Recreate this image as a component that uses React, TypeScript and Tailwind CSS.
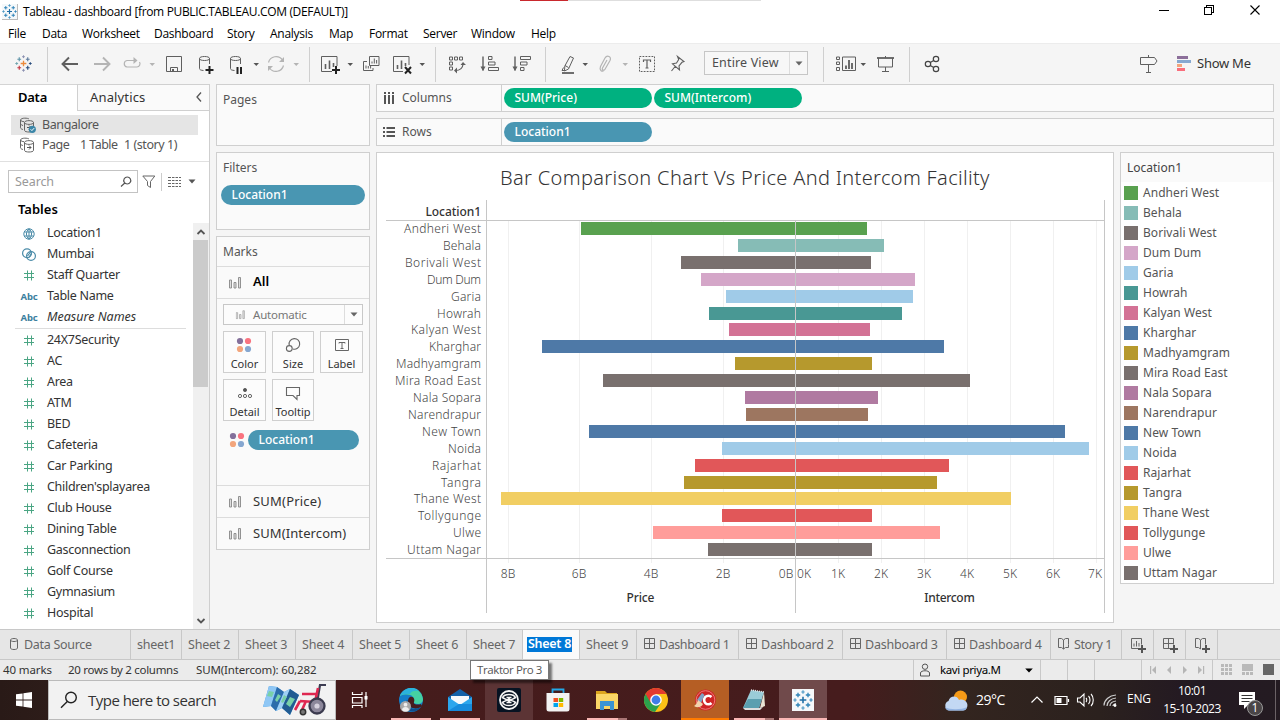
import React from 'react';

const ui = "font-['Noto_Sans','Liberation_Sans',sans-serif]";
const win = "font-['Open_Sans','Noto_Sans',sans-serif]";

/* ---------- shared icon helpers ---------- */

function Icon({ className = '', children }: { className?: string; children: React.ReactNode }) {
  return (
    <svg viewBox="0 0 24 24" fill="none" className={`h-6 w-6 shrink-0 ${className}`}>
      {children}
    </svg>
  );
}

function Caret({ className = '', light = false }: { className?: string; light?: boolean }) {
  return (
    <svg viewBox="0 0 8 24" className={`h-6 w-2 shrink-0 ${className}`}>
      <path d="M1.500 11h5.500L4.250 14z" fill={light ? '#b4b4b4' : '#555'} />
    </svg>
  );
}

function Sep({ className = '' }: { className?: string }) {
  return <div className={`-mt-[5px] h-[35px] w-px shrink-0 bg-[#cfcfcf] ${className}`} />;
}

function Plus({ x, y, s, c, w = 1 }: { x: number; y: number; s: number; c: string; w?: number }) {
  return <path d={`M${x - s} ${y}h${2 * s}M${x} ${y - s}v${2 * s}`} stroke={c} strokeWidth={w} />;
}

function TableauMark({ colors, className }: { colors: string[]; className: string }) {
  return (
    <svg viewBox="0 0 18 18" fill="none" className={`shrink-0 ${className}`}>
      <Plus x={9} y={9} s={3} c={colors[0]} w={1.4} />
      <Plus x={4.5} y={4.5} s={2} c={colors[1]} w={1.2} />
      <Plus x={13.5} y={4.5} s={2} c={colors[2]} w={1.2} />
      <Plus x={4.5} y={13.5} s={2} c={colors[3]} w={1.2} />
      <Plus x={13.5} y={13.5} s={2} c={colors[4]} w={1.2} />
      <Plus x={9} y={1.8} s={1.5} c={colors[5]} />
      <Plus x={9} y={16.2} s={1.5} c={colors[5]} />
      <Plus x={1.8} y={9} s={1.5} c={colors[6]} />
      <Plus x={16.2} y={9} s={1.5} c={colors[4]} />
    </svg>
  );
}

const BLUE_MARK = ['#1f6ea6', '#2f83b8', '#2f83b8', '#2f83b8', '#2f83b8', '#4a97c4', '#4a97c4'];
const COLOR_MARK = ['#eb8a3c', '#5d93a8', '#5c7a9c', '#c2343f', '#274b7c', '#8a8fb0', '#6fa5ae'];

/* ---------- title bar and menu ---------- */

function TitleBar() {
  return (
    <div className={`relative flex h-[22px] items-center bg-white ${win}`}>
      <div className="absolute left-[520px] top-0 h-px w-12 bg-[#c9282d]" />
      <div className="absolute left-[568px] top-0 h-px w-[193px] bg-[#dedede]" />
      <div className="ml-[2px] mt-[1px] flex h-[16px] w-[16px] items-center justify-center border-b border-r border-[#bbb] bg-[#f4f8fa]">
        <TableauMark colors={BLUE_MARK} className="h-[15px] w-[15px]" />
      </div>
      <span className="ml-[5px] mt-[2px] whitespace-nowrap text-[12px] tracking-[-0.34px] text-black">
        Tableau - dashboard [from PUBLIC.TABLEAU.COM (DEFAULT)]
      </span>
      <svg viewBox="0 0 120 22" fill="none" stroke="#000" className="ml-auto mr-[10px] h-[22px] w-[120px]" shapeRendering="crispEdges">
        <path d="M9 10.5h10" />
        <path d="M54.500 7.500h7v7h-7zM56.500 7.500v-2h7v7h-2" />
        <path d="M100.500 5.500l9 9M109.500 5.500l-9 9" shapeRendering="auto" strokeWidth="1.1" />
      </svg>
    </div>
  );
}

function MenuBar() {
  const item = 'shrink-0';
  return (
    <div className={`flex h-[21px] items-center whitespace-nowrap bg-white pb-px pl-2 pt-[3px] text-[12px] tracking-[-0.28px] text-black ${win}`}>
      <span className={`${item} w-[34px]`}>File</span>
      <span className={`${item} w-[40px]`}>Data</span>
      <span className={`${item} w-[72px]`}>Worksheet</span>
      <span className={`${item} w-[73px]`}>Dashboard</span>
      <span className={`${item} w-[43px]`}>Story</span>
      <span className={`${item} w-[59px]`}>Analysis</span>
      <span className={`${item} w-[40px]`}>Map</span>
      <span className={`${item} w-[54px]`}>Format</span>
      <span className={`${item} w-[48px]`}>Server</span>
      <span className={`${item} w-[60px]`}>Window</span>
      <span>Help</span>
    </div>
  );
}

/* ---------- toolbar ---------- */

const G = '#5f5f5f';
const L = '#b4b4b4';

function Cylinder() {
  return (
    <path
      d="M6.500 6.500c0-1.300 2.200-2 5-2s5 .7 5 2-2.200 2-5 2-5-.7-5-2zv10c0 1.300 1.500 1.800 4 2M16.500 6.500v5.500"
      stroke={G}
    />
  );
}

function Toolbar() {
  return (
    <div className="flex h-[41px] items-start border-t border-[#ececec] bg-[#f5f5f5] pt-[8px]">
      <TableauMark colors={COLOR_MARK} className="ml-[15px] mt-[3px] h-[17px] w-[17px]" />
      <Sep className="ml-[15px]" />
      <Icon className="ml-[10px]">
        <path d="M4.500 12H20M11 5.500L4.500 12l6.500 6.500" stroke={G} strokeWidth="1.900" />
      </Icon>
      <Icon className="ml-[8px]">
        <path d="M4 12h15.500M13 5.500l6.500 6.500-6.500 6.500" stroke={L} strokeWidth="1.900" />
      </Icon>
      <Icon className="ml-[6px]">
        <path d="M14 8.500H7A3.300 3.300 0 0 0 7 15h10a3.300 3.300 0 0 0 2.500-5" stroke={L} strokeWidth="1.200" />
        <path d="M13.500 5l4 3.500-4 3.500z" fill={L} />
      </Icon>
      <Caret light className="ml-[4px]" />
      <Icon className="ml-[6px]">
        <path d="M4.500 4.500h15v15h-15zM8.500 19.500v-4h7v4" stroke={G} />
        <path d="M10 17h2v2.500h-2z" fill={G} />
      </Icon>
      <Icon className="ml-[7px]">
        <Cylinder />
        <Plus x={16.5} y={18} s={4} c="#222" w={2} />
      </Icon>
      <Icon className="ml-[7px]">
        <Cylinder />
        <path d="M13.500 15v7M17 15v7" stroke="#222" strokeWidth="2" />
      </Icon>
      <Caret className="ml-[4px]" />
      <Icon className="ml-[4px]">
        <path d="M4.500 10.500A7.800 7.800 0 0 1 18.500 8M19.500 13.500A7.800 7.800 0 0 1 5.500 16" stroke={L} strokeWidth="1.200" />
        <path d="M20 5v5h-5zM4 19v-5h5z" fill={L} />
      </Icon>
      <Caret light className="ml-[4px]" />
      <Sep className="ml-[9px]" />
      <Icon className="ml-[8px]">
        <path d="M14 19.500H3.500v-15h15.500V14" stroke={G} />
        <path d="M7.500 17v-5M11.500 17V8.500M15.500 15v-4" stroke={G} strokeWidth="1.600" />
        <Plus x={18} y={18} s={4} c="#222" w={2} />
      </Icon>
      <Caret className="ml-[4px]" />
      <Icon className="ml-[5px]">
        <path d="M10.500 4.500h9.500v9h-9.500zM8 9.500H4.500v9H14V16" stroke={G} />
        <path d="M13 11.500V9.500M15.300 11.500V6.500M17.600 11.500V8M7 16.500v-3M9.300 16.500v-2.500M11.600 16.500v-2.500" stroke={G} />
      </Icon>
      <Icon className="ml-[7px]">
        <path d="M13 19.500H3.500v-15h15.500V13" stroke={G} />
        <path d="M7.500 17v-4M11.500 17V8.500M15.500 14v-3" stroke={G} strokeWidth="1.600" />
        <path d="M15 15l6 6.500M21 15l-6 6.500" stroke="#222" strokeWidth="2" />
      </Icon>
      <Caret className="ml-[4px]" />
      <Sep className="ml-[9px]" />
      <Icon className="ml-[9px]">
        <path d="M4.500 5h3v3h-3zM9.500 5h3v3h-3zM14.500 5h3v3h-3zM4.500 10h3v3h-3zM4.500 15h3v3h-3z" stroke={G} />
        <path d="M10.500 18.500c4 0 7-2 7.500-6" stroke={G} strokeWidth="1.200" />
        <path d="M12 15.500l-3 3 3 3zM15.500 13l2.500-3 3 3z" fill={G} />
      </Icon>
      <Icon className="ml-[9px]">
        <path d="M5 4.500v14" stroke={G} strokeWidth="1.400" />
        <path d="M2.500 14.500h5L5 19z" fill={G} />
        <path d="M10.500 4.500h3.500v3h-3.500zM10.500 10h6.500v3h-6.500zM10.500 15.500h10v3h-10z" stroke={G} />
      </Icon>
      <Icon className="ml-[8px]">
        <path d="M5 4.500v14" stroke={G} strokeWidth="1.400" />
        <path d="M2.500 14.500h5L5 19z" fill={G} />
        <path d="M10.500 4.500h10v3h-10zM10.500 10h6.500v3h-6.500zM10.500 15.500h3.500v3h-3.500z" stroke={G} />
      </Icon>
      <Sep className="ml-[11px]" />
      <Icon className="ml-[10px]">
        <path d="M14 4.500l3.500 1.500-5 11-4 2 .3-5zM9 13.500l3.500 2M7.500 15.500l-1.500 3h3" stroke={G} />
        <path d="M6 21h12" stroke={G} strokeWidth="1.800" />
      </Icon>
      <Caret className="ml-[1px]" />
      <Icon className="ml-[4px]">
        <path d="M14 8l-4.500 8c-1 2 1.500 3 2.500 1.300l5-8.800c2-4-3-6-5-2.500l-4.500 8.500c-1.500 4 1.500 5 3 4.500" stroke={L} strokeWidth="1.200" />
      </Icon>
      <Caret light className="ml-[4px]" />
      <Icon className="ml-[6px]">
        <path d="M4.500 4.500h15v15h-15z" stroke={G} strokeDasharray="1.800 1.200" />
        <path d="M8.500 10V8h7v2M12 8v8M10.500 16h3" stroke={G} strokeWidth="1.200" />
      </Icon>
      <Icon className="ml-[6px]">
        <path d="M12.500 4.500l6.500 5-2 .8-3 3.500 .5 4-7-6 4-.8 2.200-3.500zM10.500 14L6.500 19" stroke={G} strokeWidth="1.100" />
      </Icon>
      <div className={`-mt-px ml-[15px] flex h-[24px] w-[104px] shrink-0 items-center border border-[#c6c6c6] bg-[#f7f7f7] text-[12.500px] text-[#4d4d4d] ${ui}`}>
        <span className="w-[84px] whitespace-nowrap pl-[7px] pt-px tracking-[0.15px]">Entire View</span>
        <span className="flex h-full flex-1 items-center justify-center border-l border-[#ddd]">
          <svg viewBox="0 0 8 5" className="h-[5px] w-[8px]">
            <path d="M.5.500h7L4 4.500z" fill="#666" />
          </svg>
        </span>
      </div>
      <Sep className="ml-[15px]" />
      <Icon className="ml-[10px]">
        <path d="M2.500 5h3v2.500h-3zM2.500 10h3v2.500h-3zM2.500 15.500h3v3h-3zM8.500 5h13v13.500h-13z" stroke={G} />
        <path d="M12 17v-3.500M15 17V8M18 17v-6" stroke={G} strokeWidth="1.800" />
      </Icon>
      <Caret className="ml-[1px]" />
      <Icon className="ml-[6px]">
        <path d="M4 6h17" stroke={G} strokeWidth="1.800" />
        <path d="M5.500 6v9h14V6M12.500 4v2M12.500 15v4M9 19.500h7" stroke={G} />
      </Icon>
      <Sep className="ml-[12px]" />
      <Icon className="ml-[10px]">
        <circle cx="8" cy="12" r="2.700" stroke="#444" strokeWidth="1.200" />
        <circle cx="16" cy="7" r="2.700" stroke="#444" strokeWidth="1.200" />
        <circle cx="16" cy="17" r="2.700" stroke="#444" strokeWidth="1.200" />
        <path d="M10.300 10.500L13.700 8.400M10.300 13.500l3.400 2.100" stroke="#444" strokeWidth="1.200" />
      </Icon>
      <Icon className="ml-[192px]">
        <path d="M4.500 5.500h14l2.500 3.500-2.500 3.500h-14zM12.500 3v2.500M12.500 12.500v8M10 20.500h5" stroke={G} />
      </Icon>
      <svg viewBox="0 0 14 16" className="ml-[17px] mt-[4px] h-4 w-[14px] shrink-0">
        <path d="M0 0h11v3H0z" fill="#8c6f9a" />
        <path d="M0 4h14v3H0z" fill="#86a8d0" />
        <path d="M0 8h5v3H0z" fill="#f3a57c" />
        <path d="M0 12h8v3H0z" fill="#f96e7c" />
      </svg>
      <span className={`ml-[6px] mt-[2px] whitespace-nowrap text-[13px] tracking-[-0.25px] text-[#333] ${ui}`}>Show Me</span>
    </div>
  );
}

/* ---------- data pane ---------- */

function FieldIcon({ kind }: { kind: string }) {
  if (kind === 'abc')
    return <span className="block text-center text-[9.500px] font-bold leading-[21px] tracking-[-0.1px] text-[#3d7f9e]">Abc</span>;
  return (
    <svg viewBox="0 0 16 21" fill="none" className="mx-auto h-[21px] w-4">
      {kind === 'num' && <path d="M6.500 5.500v10M10.500 5.500v10M3 8.500h10M3 12.500h10" stroke="#4aa583" strokeWidth="1" />}
      {kind === 'globe' && (
        <path
          d="M2.800 11a5.200 5.200 0 1 0 10.400 0 5.200 5.200 0 1 0-10.400 0M8 5.800v10.400M3.300 9h9.400M3.300 13h9.400M8 5.800c-3.400 3-3.400 7.400 0 10.400M8 5.800c3.400 3 3.400 7.400 0 10.400"
          stroke="#4a8ba8"
        />
      )}
      {kind === 'group' && (
        <g stroke="#4a8ba8" strokeWidth="1.200">
          <circle cx="6" cy="9.300" r="4.400" />
          <circle cx="10" cy="12" r="4.400" />
          <path d="M6.500 12l3-4M7.500 14l3-4.500" />
        </g>
      )}
    </svg>
  );
}

function Field({ kind, label, italic = false }: { kind: string; label: string; italic?: boolean }) {
  return (
    <div className="flex h-[21px] items-center">
      <span className="ml-[17px] w-[24px] shrink-0">{<FieldIcon kind={kind} />}</span>
      <span className={`ml-[6px] whitespace-nowrap ${italic ? 'italic tracking-[0px]' : ''}`}>{label}</span>
    </div>
  );
}

function SourceIcon({ checked }: { checked?: boolean }) {
  return (
    <svg viewBox="0 0 18 18" fill="none" className="h-[18px] w-[18px] shrink-0">
      <path d="M10 3c-1-1-7.500-1.500-8.500.8v8c.3 1 1.200 1.400 2.500 1.700M1.500 4c.5 1.200 2 1.600 3.500 1.700M1.500 8c.5 1 1.300 1.300 2.500 1.500" stroke="#666" />
      <path d="M5.500 6.500c0-2.500 9-2.500 9 0s-9 2.500-9 0zv8c.5 2 8.500 2 9 0v-8" stroke="#666" />
      <path d="M8 11.500h4M10 9.500l2 2-2 2" stroke="#555" />
      {checked && (
        <g>
          <circle cx="13.300" cy="13.300" r="3.600" fill="#3b86a8" />
          <path d="M11.600 13.300l1.300 1.300 2.300-2.500" stroke="#fff" />
        </g>
      )}
    </svg>
  );
}

const DIMENSIONS = [
  { kind: 'globe', label: 'Location1' },
  { kind: 'group', label: 'Mumbai' },
  { kind: 'num', label: 'Staff Quarter' },
  { kind: 'abc', label: 'Table Name' },
  { kind: 'abc', label: 'Measure Names', italic: true },
];

const MEASURES = [
  '24X7Security', 'AC', 'Area', 'ATM', 'BED', 'Cafeteria', 'Car Parking', "Children'splayarea",
  'Club House', 'Dining Table', 'Gasconnection', 'Golf Course', 'Gymnasium', 'Hospital',
];

function DataPane() {
  return (
    <div className="flex w-[210px] shrink-0 flex-col border-r border-[#cfcfcf] bg-white">
      <div className="flex h-[27px] shrink-0 text-[13px]">
        <div className="w-[77px] border-t border-[#d4d4d4] pl-[18px] pt-[3px] text-[13px] font-semibold tracking-[-0.25px] text-black">Data</div>
        <div className="flex flex-1 border border-r-0 border-[#d0d0d0] bg-[#fafafa] pl-[12px] pt-[3px] text-[#333]">
          <span className="tracking-[0.15px]">Analytics</span>
          <svg viewBox="0 0 8 12" fill="none" className="ml-auto mr-[6px] mt-[3px] h-3 w-2">
            <path d="M6 1.500L2 6l4 4.500" stroke="#555" strokeWidth="1.300" />
          </svg>
        </div>
      </div>
      <div className="ml-[11px] mt-[4px] flex h-[20px] w-[187px] shrink-0 items-center bg-[#e5e5e5] pl-[8px] text-[12.500px] text-[#555]">
        <SourceIcon checked />
        <span className="ml-[5px] tracking-[-0.4px]">Bangalore</span>
      </div>
      <div className="ml-[11px] flex h-[20px] shrink-0 items-center pl-[8px] text-[12.500px] text-[#555]">
        <SourceIcon />
        <span className="ml-[5px] w-[38px] tracking-[-0.5px]">Page</span>
        <span className="w-[44px] whitespace-nowrap tracking-[-0.55px]">1 Table</span>
        <span className="whitespace-nowrap tracking-[-0.45px]">1 (story 1)</span>
      </div>
      <div className="mt-[6px] h-px shrink-0 bg-[#e0e0e0]" />
      <div className="ml-[8px] mt-[8px] flex h-[23px] shrink-0 items-center">
        <div className="flex h-[23px] w-[130px] items-center border border-[#c3c3c3] pl-[6px] pt-px text-[12.500px] tracking-[-0.1px] text-[#999]">
          Search
          <svg viewBox="0 0 12 12" fill="none" className="ml-auto mr-[5px] h-3 w-3">
            <path d="M7.300 1a3.500 3.500 0 1 1-.1 0zM4.800 7L1 10.500" stroke="#555" strokeWidth="1.200" />
          </svg>
        </div>
        <svg viewBox="0 0 14 14" fill="none" className="ml-[4px] h-[14px] w-[14px]">
          <path d="M.8 1h12L8.500 6.500v6l-3-2v-4z" stroke="#666" />
        </svg>
        <div className="ml-[5px] h-[18px] w-px bg-[#ccc]" />
        <svg viewBox="0 0 13 10" className="ml-[6px] h-[10px] w-[13px]" stroke="#666" strokeWidth="1.100">
          <path d="M0 .5h3M4 .5h2.500M7.500.5H10M11 .5h2M0 3.500h3M4 3.500h2.500M7.500 3.500H10M11 3.500h2M0 6.500h3M4 6.500h2.500M7.500 6.500H10M11 6.500h2M0 9.500h3M4 9.500h2.500M7.500 9.500H10M11 9.500h2" />
        </svg>
        <svg viewBox="0 0 8 5" className="ml-[7px] h-[5px] w-[8px]">
          <path d="M.5.500h7L4 4.500z" fill="#555" />
        </svg>
      </div>
      <div className="ml-[18px] mt-[5px] h-[25px] shrink-0 text-[13px] font-semibold leading-[22px] tracking-[0px] text-black">Tables</div>
      <div className="flex min-h-0 flex-1">
        <div className="w-[193px] overflow-hidden text-[12.500px] tracking-[-0.28px] text-[#333]">
          {DIMENSIONS.map((f) => (
            <Field key={f.label} {...f} />
          ))}
          <div className="mb-px ml-[15px] mr-[7px] h-px bg-[#ddd]" />
          {MEASURES.map((m) => (
            <Field key={m} kind="num" label={m} />
          ))}
        </div>
        <div className="flex w-[16px] flex-col bg-[#f0f0f0]">
          <div className="flex h-[17px] items-center justify-center">
            <svg viewBox="0 0 10 8" fill="none" className="h-2 w-[10px]">
              <path d="M1.500 6L5 2.500 8.500 6" stroke="#555" strokeWidth="1.800" />
            </svg>
          </div>
          <div className="mr-px h-[147px] bg-[#cbcbcb]" />
          <div className="mb-[4px] mt-auto flex justify-center">
            <svg viewBox="0 0 10 8" fill="none" className="h-2 w-[10px]">
              <path d="M1.500 2L5 5.500 8.500 2" stroke="#555" strokeWidth="1.800" />
            </svg>
          </div>
        </div>
      </div>
    </div>
  );
}

/* ---------- cards ---------- */

const card = 'border border-[#cfcfcf] bg-[#fafafa]';

function Pill({ className, children }: { className: string; children: React.ReactNode }) {
  return (
    <div className={`flex h-[20px] shrink-0 items-center whitespace-nowrap rounded-full pl-[10.500px] text-[12px] font-medium text-white ${className}`}>
      {children}
    </div>
  );
}

function BarsIcon({ className = '' }: { className?: string }) {
  return (
    <svg viewBox="0 0 14 13" fill="#dedede" stroke="#888" strokeWidth="0.900" className={`h-[13px] w-[14px] shrink-0 ${className}`}>
      <path d="M.5 4h2v8h-2zM5 6.500h2v5.500h-2zM9.500 1.500h2v10.500h-2z" />
    </svg>
  );
}

function ColorDots({ className = '' }: { className?: string }) {
  return (
    <svg viewBox="0 0 16 16" className={`h-4 w-4 shrink-0 ${className}`}>
      <circle cx="4" cy="4" r="3.100" fill="#84709b" />
      <circle cx="12" cy="4" r="3.100" fill="#f9737f" />
      <circle cx="4" cy="12" r="3.100" fill="#f2a57c" />
      <circle cx="12" cy="12" r="3.100" fill="#86a7d0" />
    </svg>
  );
}

function MarkButton({ label, children }: { label: string; children: React.ReactNode }) {
  return (
    <div className="flex h-[42px] flex-col items-center border border-[#cfcfcf] bg-[#fcfcfc] pt-[5px]">
      {children}
      <span className="mt-[1px] whitespace-nowrap text-[11px] leading-[20px] text-[#333]">{label}</span>
    </div>
  );
}

function Cards() {
  return (
    <div className="ml-[6px] flex w-[154px] shrink-0 flex-col text-[12px] text-[#555]">
      <div className={`${card} h-[62px] pl-[6px] pt-[6px]`}>Pages</div>
      <div className={`${card} mt-[6px] h-[78px] pt-[6px]`}>
        <div className="h-[26px] pl-[6px]">Filters</div>
        <Pill className="ml-[4px] w-[144px] bg-[#4996b2]">Location1</Pill>
      </div>
      <div className={`${card} mt-[6px] flex h-[314px] flex-col`}>
        <div className="flex h-[29px] items-center pl-[6px] pt-px">Marks</div>
        <div className="flex h-[33px] items-center border-y border-[#dcdcdc] text-[13px] font-semibold text-black">
          <BarsIcon className="ml-[12px] mr-[10px]" />
          <span className="-mt-px">All</span>
        </div>
        <div className="ml-[6px] mt-[5px] flex h-[21px] w-[140px] items-center border border-[#c8c8c8] bg-[#fcfcfc] text-[11.500px] tracking-[-0.2px] text-[#777]">
          <BarsIcon className="ml-[10px] mr-[5px] origin-center scale-75 opacity-80" />
          Automatic
          <span className="ml-auto flex h-full w-[18px] items-center justify-center border-l border-[#ddd]">
            <svg viewBox="0 0 8 5" className="h-[5px] w-[8px]">
              <path d="M.5.500h7L4 4.500z" fill="#666" />
            </svg>
          </span>
        </div>
        <div className="ml-[6px] mt-[6px] grid w-[140px] grid-cols-[43px_42px_43px] gap-x-[6px] gap-y-[6px]">
          <MarkButton label="Color">
            <ColorDots className="-ml-[2px]" />
          </MarkButton>
          <MarkButton label="Size">
            <svg viewBox="0 0 16 16" fill="none" stroke="#666" strokeWidth="1.100" className="h-4 w-4 shrink-0">
              <path d="M4.200 8A5.300 5.300 0 1 1 8 12" />
              <circle cx="4.300" cy="11.500" r="2.900" />
            </svg>
          </MarkButton>
          <MarkButton label="Label">
            <svg viewBox="0 0 16 16" fill="none" stroke="#666" className="h-4 w-4 shrink-0">
              <path d="M1.500 2.500h13v11h-13zM5 6.500v-1h6v1M8 5.500v5.500M6.500 11.500h3" />
            </svg>
          </MarkButton>
          <MarkButton label="Detail">
            <svg viewBox="0 0 16 16" fill="none" stroke="#666" className="h-4 w-4 shrink-0">
              <circle cx="8" cy="5" r="1.600" fill="#555" />
              <circle cx="3" cy="11" r="1.600" />
              <circle cx="8" cy="11" r="1.600" />
              <circle cx="13" cy="11" r="1.600" />
            </svg>
          </MarkButton>
          <MarkButton label="Tooltip">
            <svg viewBox="0 0 16 16" fill="none" stroke="#666" strokeWidth="1.100" className="h-4 w-4 shrink-0">
              <path d="M1.500 2.500h13v8h-2.500v4l-4-4H1.500z" />
            </svg>
          </MarkButton>
        </div>
        <div className="mt-[9px] flex items-center">
          <ColorDots className="ml-[12px]" />
          <Pill className="ml-[3px] w-[111px] bg-[#4996b2]">Location1</Pill>
        </div>
        <div className="mt-auto flex h-[32px] items-center border-t border-[#dcdcdc] text-[13px] tracking-[0.2px] text-[#333]">
          <BarsIcon className="ml-[12px] mr-[10px]" />
          SUM(Price)
        </div>
        <div className="flex h-[32px] items-center border-t border-[#dcdcdc] text-[13px] tracking-[0.1px] text-[#333]">
          <BarsIcon className="ml-[12px] mr-[10px]" />
          SUM(Intercom)
        </div>
      </div>
    </div>
  );
}

/* ---------- chart ---------- */

type Row = { name: string; color: string; from: number; to: number; width: number };

const ROWS: Row[] = [
  { name: 'Andheri West', color: '#59a14f', from: 581, to: 867, width: 77 },
  { name: 'Behala', color: '#86bcb6', from: 738, to: 884, width: 38 },
  { name: 'Borivali West', color: '#79706e', from: 681, to: 871, width: 76 },
  { name: 'Dum Dum', color: '#d4a6c8', from: 701, to: 915, width: 54 },
  { name: 'Garia', color: '#a0cbe8', from: 726, to: 913, width: 30 },
  { name: 'Howrah', color: '#499894', from: 709, to: 902, width: 44 },
  { name: 'Kalyan West', color: '#d37295', from: 729, to: 870, width: 70 },
  { name: 'Kharghar', color: '#4e79a7', from: 542, to: 944, width: 52 },
  { name: 'Madhyamgram', color: '#b6992d', from: 735, to: 872, width: 85 },
  { name: 'Mira Road East', color: '#79706e', from: 603, to: 970, width: 86 },
  { name: 'Nala Sopara', color: '#b07aa1', from: 745, to: 878, width: 68 },
  { name: 'Narendrapur', color: '#9d7660', from: 746, to: 868, width: 73 },
  { name: 'New Town', color: '#4e79a7', from: 589, to: 1065, width: 59 },
  { name: 'Noida', color: '#a0cbe8', from: 722, to: 1089, width: 33 },
  { name: 'Rajarhat', color: '#e15759', from: 695, to: 949, width: 49 },
  { name: 'Tangra', color: '#b6992d', from: 684, to: 937, width: 40 },
  { name: 'Thane West', color: '#f1ce63', from: 501, to: 1011, width: 67 },
  { name: 'Tollygunge', color: '#e15759', from: 722, to: 872, width: 63 },
  { name: 'Ulwe', color: '#ff9d9a', from: 653, to: 940, width: 28 },
  { name: 'Uttam Nagar', color: '#79706e', from: 708, to: 872, width: 74 },
];

const GRID = [508, 579, 651, 723, 838, 881, 924, 967, 1010, 1053, 1096];
const TICKS: [string, number][] = [
  ['8B', 508], ['6B', 579], ['4B', 651], ['2B', 723], ['0B', 786], ['0K', 804], ['1K', 838],
  ['2K', 881], ['3K', 924], ['4K', 967], ['5K', 1010], ['6K', 1053], ['7K', 1095],
];

function Chart() {
  return (
    <div className="h-[471px] w-[738px] shrink-0 border border-[#cfcfcf] bg-white">
      <svg viewBox="377 153 736 469" className={`block h-[469px] w-[736px] ${ui}`}>
        <text x="500" y="185" fontSize="20" fontWeight="300" fill="#333" textLength="489.500">
          Bar Comparison Chart Vs Price And Intercom Facility
        </text>
        <g shapeRendering="crispEdges">
          {GRID.map((x) => (
            <rect key={x} x={x} y={221} width={1} height={342} fill="#f0f0f0" />
          ))}
          {ROWS.map((r, i) => (
            <rect key={r.name} x={r.from} y={Math.round(222 + i * 16.9)} width={r.to - r.from} height={13} fill={r.color} />
          ))}
          <rect x={386} y={220} width={719} height={1} fill="#c6c6c6" />
          <rect x={386} y={558} width={719} height={1} fill="#c6c6c6" />
          <rect x={486} y={200} width={1} height={413} fill="#c6c6c6" />
          <rect x={795} y={221} width={1} height={392} fill="#c6c6c6" />
          <rect x={1104} y={200} width={1} height={413} fill="#c6c6c6" />
        </g>
        <text x="481" y="216" textAnchor="end" fontSize="12" fontWeight="500" fill="#333" textLength="55.500">
          Location1
        </text>
        {ROWS.map((r, i) => (
          <text key={r.name} x={481} y={Math.round(233 + i * 16.9)} textAnchor="end" fontSize="12" fontWeight="300" fill="#444" textLength={r.width}>
            {r.name}
          </text>
        ))}
        {TICKS.map(([t, x]) => (
          <text key={t} x={x} y={578} textAnchor="middle" fontSize="12" fontWeight="300" fill="#444">
            {t}
          </text>
        ))}
        <text x="640.500" y="602" textAnchor="middle" fontSize="12" fontWeight="500" fill="#333" textLength="28">
          Price
        </text>
        <text x="949.500" y="602" textAnchor="middle" fontSize="12" fontWeight="500" fill="#333" textLength="50.500">
          Intercom
        </text>
      </svg>
    </div>
  );
}

function Legend() {
  return (
    <div className="ml-[6px] h-[432px] w-[154px] shrink-0 border border-[#cfcfcf] bg-white">
      <div className="flex h-[29px] items-center bg-[#fafafa] pl-[6px] pt-px text-[12px] text-[#444]">Location1</div>
      {ROWS.map((r) => (
        <div key={r.name} className="flex h-[20px] items-center pl-[3px] pt-px text-[12px] text-[#555]">
          <svg className="h-[14px] w-[14px]" viewBox="0 0 14 14">
            <rect width="14" height="14" fill={r.color} />
          </svg>
          <span className="ml-[5px] mt-px whitespace-nowrap tracking-[0.05px]">{r.name}</span>
        </div>
      ))}
    </div>
  );
}

function Workspace() {
  return (
    <div className="ml-[6px] flex w-[898px] shrink-0 flex-col">
      <div className={`${card} flex h-[28px] items-center text-[12px] text-[#555]`}>
        <svg viewBox="0 0 12 12" className="ml-[6px] h-3 w-3" fill="#555">
          <path d="M1 0h2v2H1zM5 0h2v2H5zM9 0h2v2H9zM1 3h2v9H1zM5 3h2v9H5zM9 3h2v9H9z" />
        </svg>
        <span className="ml-[7px] w-[99px]">Columns</span>
        <div className="flex h-full items-center border-l border-[#cfcfcf] pl-[2px]">
          <Pill className="w-[148px] bg-[#00b180]">SUM(Price)</Pill>
          <Pill className="ml-[2px] w-[148px] bg-[#00b180]">SUM(Intercom)</Pill>
        </div>
      </div>
      <div className={`${card} mt-[6px] flex h-[28px] items-center text-[12px] text-[#555]`}>
        <svg viewBox="0 0 12 12" className="ml-[6px] h-3 w-3" fill="#555">
          <path d="M0 1h2v2H0zM0 5h2v2H0zM0 9h2v2H0zM3.500 1H12v2H3.500zM3.500 5H12v2H3.500zM3.500 9H12v2H3.500z" />
        </svg>
        <span className="ml-[7px] w-[99px]">Rows</span>
        <div className="flex h-full items-center border-l border-[#cfcfcf] pl-[2px]">
          <Pill className="w-[148px] bg-[#4996b2]">Location1</Pill>
        </div>
      </div>
      <div className="mt-[6px] flex items-start">
        <Chart />
        <Legend />
      </div>
    </div>
  );
}

/* ---------- sheet tabs ---------- */

const tab = 'flex shrink-0 items-center border-r border-[#c8c8c8] pl-[6px] pt-px';

function GridGlyph({ plus = false }: { plus?: boolean }) {
  return (
    <svg viewBox="0 0 16 16" fill="none" stroke="#666" className="h-4 w-4 shrink-0">
      <path d={plus ? 'M8 11.500H1.500v-10h10v6M6.500 1.500v10M1.500 6.500h10' : 'M1.500 1.500h10v10h-10zM6.500 1.500v10M1.500 6.500h10'} />
      {plus && <Plus x={12} y={12} s={4} c="#555" w={2} />}
    </svg>
  );
}

function BookGlyph({ plus = false }: { plus?: boolean }) {
  return (
    <svg viewBox="0 0 16 16" fill="none" stroke="#666" className="h-4 w-4 shrink-0">
      <path d="M6.500 3L4.500 1.500h-3v9h3l2 1.500zM6.500 3L8.500 1.500h3v6" />
      {!plus && <path d="M11.500 7.500v3h-3l-2 1.500" />}
      {plus && <Plus x={12} y={12} s={4} c="#555" w={2} />}
    </svg>
  );
}

function SheetTabs() {
  return (
    <div className="flex h-[31px] shrink-0 whitespace-nowrap border-y border-[#c8c8c8] bg-[#e6e6e6] text-[12.500px] tracking-[-0.22px] text-[#666]">
      <div className={`${tab} w-[131px] tracking-[-0.3px]`}>
        <svg viewBox="0 0 12 14" fill="none" stroke="#666" className="-mt-[3px] ml-[2px] mr-[4px] h-[14px] w-3">
          <path d="M2.500 3c0-2 7-2 7 0s-7 2-7 0v8c0 2 7 2 7 0V3" />
        </svg>
        Data Source
      </div>
      <div className={`${tab} w-[51px]`}>sheet1</div>
      <div className={`${tab} w-[57px]`}>Sheet 2</div>
      <div className={`${tab} w-[57px]`}>Sheet 3</div>
      <div className={`${tab} w-[57px]`}>Sheet 4</div>
      <div className={`${tab} w-[57px]`}>Sheet 5</div>
      <div className={`${tab} w-[57px]`}>Sheet 6</div>
      <div className={`${tab} w-[56px]`}>Sheet 7</div>
      <div className="flex w-[57px] shrink-0 items-center border-r border-[#c8c8c8] bg-[#fafafa] pl-[4px]">
        <span className="h-[15px] w-[45px] bg-[#0078d7] text-center font-semibold leading-[13px] tracking-[-0.25px] text-white">Sheet 8</span>
      </div>
      <div className={`${tab} w-[57px]`}>Sheet 9</div>
      <div className={`${tab} w-[102px] tracking-[-0.42px]`}><GridGlyph />Dashboard 1</div>
      <div className={`${tab} w-[104px]`}><GridGlyph />Dashboard 2</div>
      <div className={`${tab} w-[104px]`}><GridGlyph />Dashboard 3</div>
      <div className={`${tab} w-[104px]`}><GridGlyph />Dashboard 4</div>
      <div className={`${tab} w-[71px] tracking-[-0.4px]`}><BookGlyph /><span className="ml-px">Story 1</span></div>
      <div className={`${tab} w-[32px] pl-[8px]`}>
        <svg viewBox="0 0 16 16" fill="none" stroke="#666" className="h-4 w-4">
          <path d="M8 11.500H1.500v-10h10v6M4 9.500v-3M6.500 9.500V4M9 9.500V6" />
          <Plus x={12} y={12} s={4} c="#555" w={2} />
        </svg>
      </div>
      <div className={`${tab} w-[32px] pl-[8px]`}><GridGlyph plus /></div>
      <div className={`${tab} w-[32px] pl-[8px]`}><BookGlyph plus /></div>
    </div>
  );
}

function StatusBar() {
  return (
    <div className="relative flex h-[20px] shrink-0 items-center whitespace-nowrap bg-[#ebebeb] pl-[3px] text-[11.500px] tracking-[-0.1px] text-[#333]">
      <span className="w-[65px]">40 marks</span>
      <span className="w-[128px] tracking-[-0.3px]">20 rows by 2 columns</span>
      <span className="w-[717px] tracking-[-0.15px]">SUM(Intercom): 60,282</span>
      <div className="flex h-full w-[127px] items-center border-l border-[#c8c8c8] text-[11.500px] tracking-[-0.38px] text-black">
        <svg viewBox="0 0 12 14" fill="none" stroke="#555" className="-mt-px ml-[5px] h-[14px] w-3">
          <circle cx="6" cy="3.700" r="2.700" />
          <path d="M1.500 13v-3c0-3 9-3 9 0v3z" />
        </svg>
        <span className="ml-[9px]">kavi priya.M</span>
        <svg viewBox="0 0 8 5" className="ml-auto mr-[7px] h-[5px] w-[8px]">
          <path d="M.2.500h7.600L4 4.500z" fill="#000" />
        </svg>
      </div>
      <div className="h-full w-[27px] border-l border-[#c8c8c8]" />
      <div className="h-full w-[27px] border-l border-[#c8c8c8]" />
      <div className="h-full w-[47px] border-l border-[#c8c8c8]" />
      <div className="flex h-full w-[71px] items-center border-l border-[#c8c8c8]">
        <svg viewBox="0 0 60 8" fill="#b5b5b5" className="ml-[7px] h-2 w-[60px]">
          <path d="M1 0h1.200v8H1zM7 0v8L3 4zM22 0v8l-4-4zM34 0v8l4-4zM49 0v8l4-4zM54 0h1.200v8H54z" />
        </svg>
      </div>
      <div className="flex h-full flex-1 items-center border-l border-[#c8c8c8]">
        <svg viewBox="0 0 56 12" className="ml-[8px] h-3 w-14" fill="#b9b9b9">
          <path d="M0 0h3v3H0zM4 0h3v3H4zM8 0h3v3H8zM0 4h3v3H0zM4 4h3v3H4zM8 4h3v3H8zM0 8h3v3H0zM4 8h3v3H4zM8 8h3v3H8zM21 0h11v7H21zM21 8h3v3h-3zM25 8h3v3h-3zM29 8h3v3h-3z" />
          <path d="M42 0h11v11H42z" fill="#666" />
        </svg>
      </div>
      <div className={`absolute left-[470px] top-0 flex h-[20px] w-[79px] items-center justify-center border border-[#767676] bg-white text-[11.500px] tracking-[-0.42px] text-[#555] shadow-[3px_3px_2px_rgba(0,0,0,0.5)] ${win}`}>
        Traktor Pro 3
      </div>
    </div>
  );
}

/* ---------- taskbar ---------- */

function TaskCell({ className = '', line = '', children }: { className?: string; line?: string; children: React.ReactNode }) {
  return (
    <div className={`mr-px flex h-full w-[48px] shrink-0 flex-col items-center ${className}`}>
      <div className="flex h-[38px] items-center justify-center pt-[2px]">{children}</div>
      <div className={`h-[2px] ${line}`} />
    </div>
  );
}

const glyph = 'h-6 w-6';

function TaskBar() {
  return (
    <div className={`flex h-[40px] shrink-0 bg-[linear-gradient(90deg,#291a17_0px,#2d1c19_48px,#451c1c_336px,#461c1d_850px,#33251f_960px,#2b211e_1100px,#241a22_1180px,#241b22_1280px)] text-white ${win}`}>
      <div className="flex w-[48px] shrink-0 items-center justify-center">
        <svg viewBox="0 0 16 16" fill="#fff" className="h-4 w-4">
          <path d="M0 2.300l6.600-.9v6.200H0zM7.400 1.300L16 0v7.600H7.400zM0 8.400h6.600v6.200L0 13.700zM7.400 8.400H16V16l-8.600-1.200z" />
        </svg>
      </div>
      <div className="flex w-[288px] shrink-0 items-center border border-[#bbb] bg-[#f2f2f2] text-[#333]">
        <svg viewBox="0 0 18 18" fill="none" stroke="#222" strokeWidth="1.400" className="ml-[11px] h-[18px] w-[18px]">
          <circle cx="11" cy="6.500" r="5.300" />
          <path d="M7.300 10.500L1 16.800" />
        </svg>
        <span className="ml-[10px] whitespace-nowrap text-[15px] tracking-[-0.52px]">Type here to search</span>
        <svg viewBox="0 0 68 36" className="ml-auto mr-[6px] h-9 w-[68px]" fill="none">
          <path d="M8 4l8 1 7 5 6-3 9 6-9 20-8-7-6 3-5-5-8 1z" fill="#4d9fe0" />
          <path d="M8 4l8 1-6 19-8 1z" fill="#8fc7f5" />
          <path d="M16 5l7 5-8 19-5-5z" fill="#2b6cab" />
          <path d="M23 10l6-3-8 19-6 3z" fill="#9fd0f5" />
          <path d="M29 7l9 6-9 20-8-7z" fill="#225c92" />
          <path d="M8 9l5 1-2 5-5-1zM17 12l3 2-4 6-2-2zM23 13l3 2-4 6-2-1zM29 15l5 2-5 8-4-3z" fill="#79d0a8" />
          <path d="M58 3h7M59 3l-3 18" stroke="#3d3d52" strokeWidth="2.200" />
          <path d="M57 6l-3 14-15-1M41 12h15M39 19l-5 9M45 19l-4 9" stroke="#df2851" strokeWidth="2.600" />
          <circle cx="56" cy="24" r="7.500" fill="#8c879b" stroke="#3b3b4f" strokeWidth="2.300" />
          <circle cx="56" cy="24" r="2.600" fill="#d5d0dd" />
          <circle cx="42" cy="30" r="2.700" fill="#777" stroke="#333" strokeWidth="1.500" />
        </svg>
      </div>
      <div className="flex w-[51px] shrink-0 items-center justify-center pr-[3px]">
        <svg viewBox="0 0 18 18" fill="none" stroke="#fff" strokeWidth="1.200" className="h-[18px] w-[18px]">
          <path d="M1.500 1v2.500h9.500V1M1.500 6.500H11V12H1.500zM1.500 17v-2.500H11V17M15 1v15" />
          <path d="M13.500 5h3v3.500h-3z" fill="#fff" stroke="none" />
        </svg>
      </div>
      <TaskCell line="w-[40px] bg-[#f9b7b5]">
        <svg viewBox="0 0 24 24" className={glyph}>
          <circle cx="12" cy="12" r="12" fill="#157fca" />
          <path d="M1 8C5-2 22-3 24 11c0 5-5 6-9 4-1-1 1-3-1-6-2-3-9-3-13-1z" fill="#45d0a2" />
          <path d="M1 8C5-2 16-2 20 3c-4-1-8 0-9 3-4 0-7 0-10 2z" fill="#2bb3dc" />
          <path d="M9 12c-3 6 4 12 13 7-4 6-14 6-17 0-1-3 1-6 4-7z" fill="#0e4f8e" />
          <path d="M11 9c4-1 5 3 4 5-1 3 5 3 7 2l1 2c-4 4-13 3-14-3 0-3 0-5 2-6z" fill="#461c1d" />
          <circle cx="6.500" cy="18.500" r="5.500" fill="#a8a8a8" />
          <circle cx="6.500" cy="16.700" r="1.900" fill="#eee" />
          <path d="M3 22c0-4 7-4 7 0-2 2-5 2-7 0z" fill="#eee" />
        </svg>
      </TaskCell>
      <TaskCell line="w-[40px] bg-[#f9b7b5]">
        <svg viewBox="0 0 24 24" className={glyph}>
          <path d="M0 9l12-8 12 8v3H0z" fill="#1261a9" />
          <path d="M3 8h18v8H3z" fill="#f5f9fc" />
          <path d="M0 9l12 8 12-8v14H0z" fill="#2ba6ed" />
          <path d="M0 23l11-7h13v7z" fill="#168bdc" />
        </svg>
      </TaskCell>
      <TaskCell className="bg-[#5c3435]">
        <svg viewBox="0 0 24 24" fill="none" stroke="#f5f5f5" className={glyph}>
          <rect width="24" height="24" rx="2" fill="#071322" stroke="none" />
          <circle cx="12" cy="12" r="9" strokeWidth="1.800" />
          <path d="M5.500 9.500c2-4 11-4 13 0-2 1.500-4 1.800-4.500 2.500.5.700 2.500 1 4.500 2.500-2 4-11 4-13 0 2-1.500 4-1.800 4.500-2.500-.5-.7-2.500-1-4.500-2.500z" strokeWidth="1.600" />
          <path d="M9.500 9.500h5M9.500 14.500h5" strokeWidth="1.500" />
          <circle cx="12" cy="12" r="1.600" fill="#fff" />
        </svg>
      </TaskCell>
      <TaskCell>
        <svg viewBox="0 0 24 24" className={glyph}>
          <path d="M6.500 6V1.500h11V6" fill="none" stroke="#24a8e6" strokeWidth="1.800" />
          <path d="M.5 5h23v16a2.500 2.500 0 0 1-2.500 2.500H3A2.500 2.500 0 0 1 .5 21z" fill="#f3f3f3" />
          <path d="M7.500 10H12v4H7.500z" fill="#f25022" />
          <path d="M12.800 10h4.400v4h-4.400z" fill="#7fba00" />
          <path d="M7.500 15H12v4H7.500z" fill="#00a4ef" />
          <path d="M12.800 15h4.400v4h-4.400z" fill="#ffb900" />
        </svg>
      </TaskCell>
      <TaskCell line="w-[40px] bg-[linear-gradient(90deg,#f9b7b5_31px,#a97574_31px)]">
        <svg viewBox="0 0 24 24" className={glyph}>
          <path d="M1 3h9l2 2h10v4H1z" fill="#dca51e" />
          <path d="M1 6h22v15H1z" fill="#fad667" />
          <path d="M5 13h14v9h-4v-4H9v4H5z" fill="#3b94d4" />
        </svg>
      </TaskCell>
      <TaskCell>
        <svg viewBox="0 0 24 24" className={glyph}>
          <circle cx="12" cy="12" r="12" fill="#fbc116" />
          <path d="M12 12L1.600 6A12 12 0 0 0 11 24l6-9z" fill="#2ba24c" />
          <path d="M6.500 14.500L1.600 6A12 12 0 0 1 22.400 6H12z" fill="#e33b2e" />
          <circle cx="12" cy="12" r="5.800" fill="#fff" />
          <circle cx="12" cy="12" r="4.400" fill="#3e7de8" />
        </svg>
      </TaskCell>
      <TaskCell className="bg-[#b55e24]" line="w-[48px] bg-[#ff7b00]">
        <svg viewBox="0 0 24 24" className={glyph} fill="none">
          <circle cx="12.500" cy="12" r="10.500" fill="#cf2426" />
          <circle cx="12.500" cy="12" r="9.300" stroke="#ee7a75" />
          <path d="M18.500 9a4.300 4.300 0 1 0 0 6" stroke="#fff" strokeWidth="2.600" />
          <path d="M9 5l2.500 2-3.500 8-4-3z" fill="#7fa3c6" />
          <path d="M5 12l5 4c-2 4-6 4-9 2 2-1 3-3 4-6z" fill="#f2d4ac" />
        </svg>
      </TaskCell>
      <TaskCell line="w-[40px] bg-[linear-gradient(90deg,#f9b7b5_31px,#a97574_31px)]">
        <svg viewBox="0 0 24 24" className={glyph}>
          <path d="M18 20l4-16 1 14z" fill="#e9e3d4" />
          <path d="M9 2l13 2-5 16H1z" fill="#9accd8" />
          <path d="M1 20l5-9 14 0-3 9z" fill="#5b9fb0" />
          <path d="M1 20h16l4-1-3 3H3z" fill="#ddd" />
          <path d="M9 2l13 2" stroke="#e8e8e8" strokeWidth="1.500" strokeDasharray="1 1" />
        </svg>
      </TaskCell>
      <TaskCell className="bg-[#704a4b]" line="w-[48px] bg-[#f9b7b5]">
        <div className="flex h-[22px] w-[22px] items-center justify-center bg-[#f6f8fa]">
          <TableauMark colors={BLUE_MARK} className="h-[20px] w-[20px]" />
        </div>
      </TaskCell>
      <svg viewBox="0 0 26 22" className="ml-[115px] mt-[10px] h-[22px] w-[26px] shrink-0">
        <circle cx="17.500" cy="7" r="6.500" fill="#f59a17" />
        <path d="M6 20.500a5 5 0 0 1-.5-9.500C7 5.500 14 5 16 10c5-2 10 2.500 8 7.500-.8 2-2 3-4 3z" fill="#c3d8f4" />
        <path d="M2 17c4 3 17 3 22 0-.8 2.500-2 3.500-4 3.500H6c-2 0-3.400-1.300-4-3.500z" fill="#92b3e2" />
      </svg>
      <span className="ml-[7px] mt-[9px] w-[54px] shrink-0 text-[14px] tracking-[-0.5px]">29°C</span>
      <svg viewBox="0 0 88 20" fill="none" stroke="#fff" strokeWidth="1.200" className="mt-[10px] h-5 w-[88px] shrink-0">
        <path d="M1.500 12.500L7 7l5.500 5.500" />
        <path d="M25 6.500h12v8H25zM38.500 9v3" />
        <path d="M26.500 8h5v5h-5z" fill="#fff" stroke="none" />
        <path d="M47.500 8h2.500l4-4v12l-4-4h-2.500zM56 8c1 1 1 3 0 4M58.500 6c2 2 2 6 0 8M61 4c3 3 3 9 0 12" strokeWidth="1.100" />
        <path d="M74 15.500c0-5 5-10 12-10.500M77 16c0-4 3.500-7.500 9-8M80 16c0-2.500 2.500-4.500 6-5M83 16c0-1 1-2 3-2.500" stroke="#ccc" strokeWidth="1.200" />
        <circle cx="85" cy="15.500" r="1.400" fill="#fff" stroke="none" />
      </svg>
      <span className="ml-[9px] mt-[10px] w-[33px] shrink-0 text-[12px] tracking-[-0.2px]">ENG</span>
      <div className="flex w-[64px] shrink-0 flex-col items-center pt-[2px] text-[12px] leading-[18px] tracking-[-0.5px]">
        <span>10:01</span>
        <span className="whitespace-nowrap">15-10-2023</span>
      </div>
      <div className="relative ml-[15px] mt-[12px] h-[24px] w-[26px] shrink-0">
        <svg viewBox="0 0 26 24" className="h-6 w-[26px]">
          <path d="M0 0h16v13H9l-4 4v-4H0z" fill="#fff" />
          <path d="M2.500 3.500h11M2.500 6.500h11M2.500 9.500h8" stroke="#333" />
          <circle cx="16" cy="16" r="7.500" fill="#4a4547" stroke="#999" />
        </svg>
        <span className="absolute left-[12px] top-[7px] w-2 text-center text-[12px] leading-[18px]">1</span>
      </div>
      <div className="ml-auto mr-[4px] h-full w-px bg-[#6b6266]" />
    </div>
  );
}

export default function App() {
  return (
    <div className={`flex h-[720px] w-[1280px] flex-col overflow-hidden bg-[#f5f5f5] ${ui}`}>
      <TitleBar />
      <MenuBar />
      <Toolbar />
      <div className="flex h-[545px] shrink-0">
        <DataPane />
        <Cards />
        <Workspace />
      </div>
      <SheetTabs />
      <StatusBar />
      <TaskBar />
    </div>
  );
}
